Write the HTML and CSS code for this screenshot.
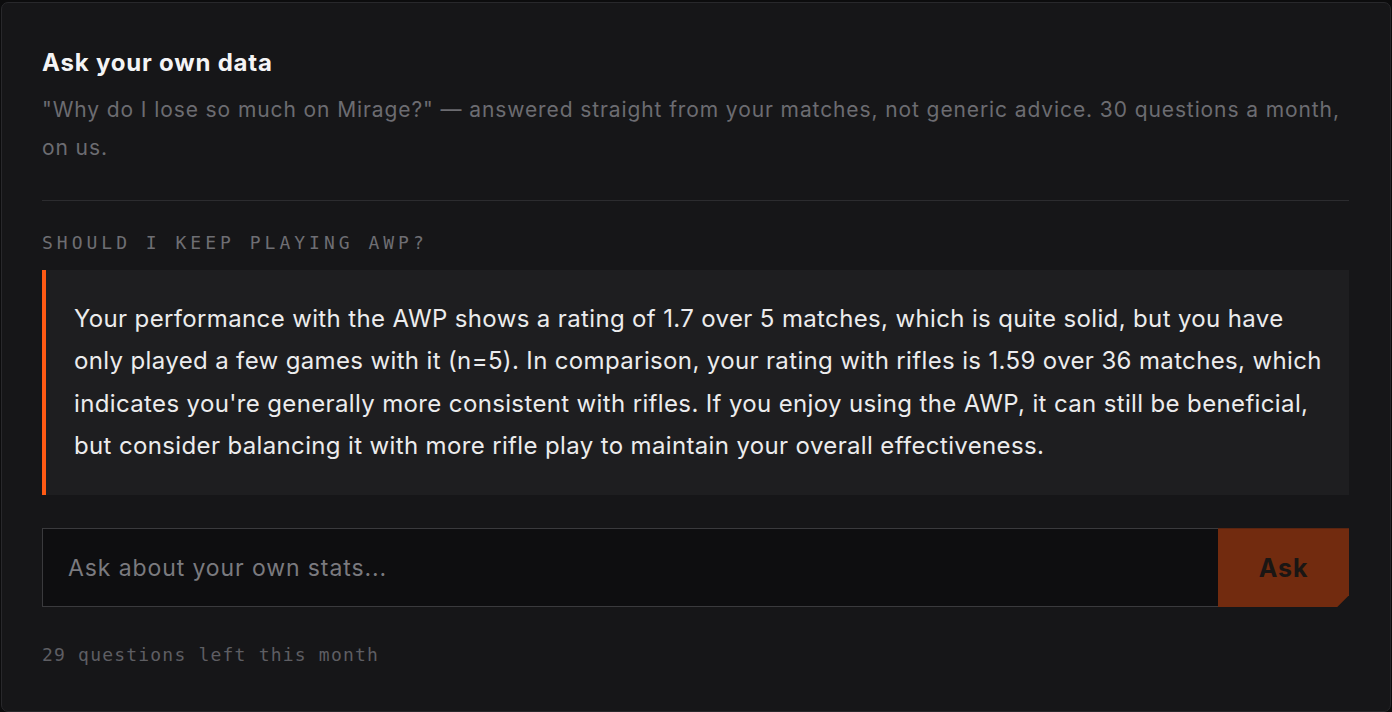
FILE: index.html
```html
<!DOCTYPE html>
<html lang="en">
<head>
<meta charset="utf-8">
<title>Ask your own data</title>
<link rel="stylesheet" href="styles.css">
</head>
<body>
<div class="page">
  <section class="card">
    <h2 class="title">Ask your own data</h2>
    <p class="subtitle">"Why do I lose so much on Mirage?" — answered straight from your matches, not generic advice. 30 questions a month, on us.</p>
    <hr class="divider">
    <div class="question">SHOULD I KEEP PLAYING AWP?</div>
    <div class="answer">Your performance with the AWP shows a rating of 1.7 over 5 matches, which is quite solid, but you have only played a few games with it (n=5). In comparison, your rating with rifles is 1.59 over 36 matches, which indicates you're generally more consistent with rifles. If you enjoy using the AWP, it can still be beneficial, but consider balancing it with more rifle play to maintain your overall effectiveness.</div>
    <form class="ask-form">
      <input class="ask-input" type="text" placeholder="Ask about your own stats...">
      <button class="ask-button" type="button">Ask</button>
    </form>
    <div class="quota">29 questions left this month</div>
  </section>
</div>
</body>
</html>
```
FILE: styles.css
```css
* { box-sizing: border-box; }
html, body {
  margin: 0;
  padding: 0;
  background: #0c0c0d;
  height: 712px;
  overflow: hidden;
}
.page {
  padding: 2px 1px 0 1px;
}
.card {
  display: flex;
  flex-direction: column;
  height: 710px;
  background: #161618;
  border: 1px solid #28282b;
  border-radius: 7px;
  padding: 45px 41px 0 40px;
  font-family: Inter, "Noto Sans", sans-serif;
}
.title {
  margin: 0;
  font-size: 24px;
  line-height: 30px;
  font-weight: 700;
  color: #f4f4f5;
  letter-spacing: 0.8px;
}
.subtitle {
  margin: 13px 0 0 0;
  font-size: 21px;
  line-height: 38px;
  letter-spacing: 0.9px;
  color: #6c6c71;
}
.divider {
  margin: 33px 0 0 0;
  border: 0;
  height: 1px;
  background: #2c2c2f;
}
.question {
  margin-top: 30px;
  font-family: "DejaVu Sans Mono", "Liberation Mono", monospace;
  font-size: 18px;
  line-height: 24px;
  letter-spacing: 4px;
  color: #6e6e73;
}
.answer {
  margin-top: 15px;
  background: #1e1e20;
  border-left: 4px solid #ff5a14;
  padding: 28px 26px 28px 28px;
  font-size: 24px;
  line-height: 42.3px;
  letter-spacing: 0.36px;
  color: #ececed;
}
.ask-form {
  margin: 33px 0 0 0;
  display: flex;
  height: 79px;
}
.ask-input {
  flex: 1;
  min-width: 0;
  background: #0e0e10;
  border: 1px solid #3a3a3d;
  border-right: 0;
  padding: 0 25px;
  font-family: Inter, "Noto Sans", sans-serif;
  font-size: 23px;
  letter-spacing: 0.9px;
  color: #e6e6e6;
  outline: none;
}
.ask-input::placeholder {
  color: #7a7a7f;
}
.ask-button {
  width: 131px;
  border: 0;
  background: #722b0f;
  color: #1a1614;
  font-family: Inter, "Noto Sans", sans-serif;
  font-size: 25px;
  font-weight: 700;
  letter-spacing: 0.9px;
  clip-path: polygon(0 0, 100% 0, 100% calc(100% - 12px), calc(100% - 12px) 100%, 0 100%);
  cursor: pointer;
}
.quota {
  margin-top: 36px;
  font-family: "DejaVu Sans Mono", "Liberation Mono", monospace;
  font-size: 18px;
  line-height: 24px;
  letter-spacing: 1.2px;
  color: #5e5e63;
}
```
